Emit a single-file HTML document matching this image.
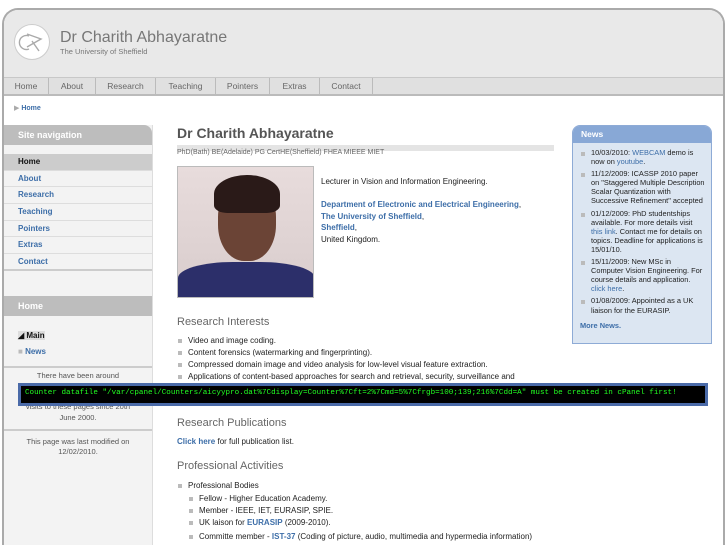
<!DOCTYPE html>
<html><head><meta charset="utf-8"><style>
*{margin:0;padding:0;box-sizing:border-box}
html,body{width:727px;height:545px;overflow:hidden}
body{background:#fff;font-family:"Liberation Sans",sans-serif;font-size:8px;color:#222;position:relative}
.a{position:absolute}
.frame{left:2px;top:8px;width:723px;height:545px;border:2px solid #aaa;border-bottom:none;border-radius:16px 16px 0 0;background:#fff}
.hdr{left:4px;top:10px;width:719px;height:67px;background:#e9e9e9;border-radius:14px 14px 0 0}
.nav{left:4px;top:77px;width:719px;height:19px;background:#e0e0e0;border-top:1px solid #c8c8c8;border-bottom:2px solid #bbb}
.nav span{float:left;height:17px;line-height:17px;text-align:center;color:#666;font-size:8.5px;border-right:1px solid #bbb}
.blue{color:#3d6ea8;font-weight:bold}
.side{left:4px;top:125px;width:149px;height:420px;background:#f3f3f3;border-right:1px solid #ddd}
.sh{background:#bdbdbd;color:#fff;font-weight:bold;font-size:9px;padding-left:14px;height:20px;line-height:20px}
.si{height:16.7px;line-height:16px;padding-left:14px;border-bottom:1px solid #ddd;font-weight:bold;color:#3d6ea8;font-size:8px}
h2{font-weight:normal;color:#666;font-size:11px}
ul{list-style:none}
li{position:relative;padding-left:11px}
li:before{content:"";position:absolute;left:1px;top:4px;width:4px;height:4px;background:#bbb}
</style></head><body>
<div class="a frame"></div>
<div class="a hdr"></div>
<div class="a" style="left:14px;top:24px;width:36px;height:36px;border-radius:50%;background:#fff;border:1px solid #ccc">
<svg width="34" height="34" viewBox="0 0 34 34"><path d="M14 11 A7 7 0 1 0 14 24" fill="none" stroke="#aaa" stroke-width="1.4"/><path d="M12 9 L26 14 L12 22 M17 16 L24 26" fill="none" stroke="#aaa" stroke-width="1.4"/></svg></div>
<div class="a" style="left:60px;top:29px;font-size:16px;color:#777">Dr Charith Abhayaratne</div>
<div class="a" style="left:60px;top:47px;font-size:7.5px;color:#777">The University of Sheffield</div>
<div class="a nav"><span style="width:45px">Home</span><span style="width:47px">About</span><span style="width:60px">Research</span><span style="width:60px">Teaching</span><span style="width:54px">Pointers</span><span style="width:50px">Extras</span><span style="width:53px">Contact</span></div>
<div class="a" style="left:14px;top:104px;font-size:7px"><span style="color:#aaa">▶</span> <span class="blue">Home</span></div>
<div class="a side">
<div class="sh" style="border-radius:0 8px 0 0">Site navigation</div>
<div style="height:9px"></div>
<div class="si" style="background:#ccc;color:#111">Home</div>
<div class="si">About</div><div class="si">Research</div><div class="si">Teaching</div><div class="si">Pointers</div><div class="si">Extras</div><div class="si" style="border-bottom:2px solid #ccc">Contact</div>
<div style="height:25px"></div>
<div class="sh">Home</div>
<div style="height:12px"></div>
<div style="padding-left:14px;font-weight:bold;line-height:16px"><span style="background:#ddd;color:#111">◢ Main</span><br><span class="blue"><span style="color:#bbb">■</span> News</span></div>
<div style="border-top:2px solid #ccc;margin-top:6px;text-align:center;color:#555;font-size:7.5px;padding-top:3px;line-height:10.5px">There have been around<br><br><br>visits to these pages since 20th<br>June 2000.</div>
<div style="border-top:2px solid #ccc;margin-top:6px;text-align:center;color:#555;font-size:7.5px;padding-top:6px;line-height:10px">This page was last modified on<br>12/02/2010.</div>
</div>
<div class="a" style="left:177px;top:125px;font-size:14px;font-weight:bold;color:#555">Dr Charith Abhayaratne</div>
<div class="a" style="left:177px;top:145px;width:377px;height:6px;background:#e4e4e4"></div>
<div class="a" style="left:177px;top:149px;font-size:7px;color:#666">PhD(Bath) BE(Adelaide) PG CertHE(Sheffield) FHEA MIEEE MIET</div>
<div class="a" style="left:177px;top:166px;width:137px;height:132px;border:1px solid #bbb;background:linear-gradient(#e8dcdc,#d8cccc);overflow:hidden">
<div class="a" style="left:40px;top:14px;width:58px;height:80px;border-radius:45%;background:#6b4436"></div>
<div class="a" style="left:36px;top:8px;width:66px;height:38px;border-radius:50% 50% 20% 20%;background:#2a1a18"></div>
<div class="a" style="left:0;top:95px;width:137px;height:40px;border-radius:40% 40% 0 0;background:#2c2f6a"></div></div>
<div class="a" style="left:321px;top:176px;font-size:8px;line-height:11.5px;color:#222">Lecturer in Vision and Information Engineering.<br><br><span class="blue">Department of Electronic and Electrical Engineering</span>,<br><span class="blue">The University of Sheffield</span>,<br><span class="blue">Sheffield</span>,<br>United Kingdom.</div>
<h2 class="a" style="left:177px;top:316px">Research Interests</h2>
<ul class="a" style="left:177px;top:335px;font-size:8px;line-height:12px"><li>Video and image coding.</li><li>Content forensics (watermarking and fingerprinting).</li><li>Compressed domain image and video analysis for low-level visual feature extraction.</li><li>Applications of content-based approaches for search and retrieval, security, surveillance and</li></ul>
<div class="a" style="left:18px;top:383px;width:690px;height:23px;background:#000;border:3px solid #4a6aa8;color:#2f2;font-family:'Liberation Mono',monospace;font-size:7.6px;line-height:15px;padding-left:4px;white-space:nowrap;overflow:hidden">Counter datafile "/var/cpanel/Counters/aicyypro.dat%7Cdisplay=Counter%7Cft=2%7Cmd=5%7Cfrgb=100;139;216%7Cdd=A" must be created in cPanel first!</div>
<h2 class="a" style="left:177px;top:417px">Research Publications</h2>
<div class="a" style="left:177px;top:437px;font-size:8px"><span class="blue">Click here</span> for full publication list.</div>
<h2 class="a" style="left:177px;top:460px">Professional Activities</h2>
<ul class="a" style="left:177px;top:480px;font-size:8px;line-height:12px"><li>Professional Bodies<ul style="margin-top:1px"><li>Fellow - Higher Education Academy.</li><li>Member - IEEE, IET, EURASIP, SPIE.</li><li>UK laison for <span class="blue">EURASIP</span> (2009-2010).</li><li style="margin-top:2px">Committe member - <span class="blue">IST-37</span> (Coding of picture, audio, multimedia and hypermedia information)</li></ul></li></ul>
<div class="a" style="left:572px;top:125px;width:140px;height:219px;background:#dce6f2;border:1px solid #8eabd6;border-radius:8px 8px 0 0">
<div style="background:#88a8d6;color:#fff;font-weight:bold;font-size:8.5px;height:17px;line-height:17px;padding-left:8px;border-radius:7px 7px 0 0">News</div>
<ul style="padding:5px 6px 0 7px;font-size:7.4px;line-height:9.1px;color:#222"><li style="margin-bottom:3px">10/03/2010: <span class="blue" style="font-weight:normal">WEBCAM</span> demo is now on <span class="blue" style="font-weight:normal">youtube</span>.</li><li style="margin-bottom:3px">11/12/2009: ICASSP 2010 paper on "Staggered Multiple Description Scalar Quantization with Successive Refinement" accepted</li><li style="margin-bottom:3px">01/12/2009: PhD studentships available. For more details visit <span class="blue" style="font-weight:normal">this link</span>. Contact me for details on topics. Deadline for applications is 15/01/10.</li><li style="margin-bottom:3px">15/11/2009: New MSc in Computer Vision Engineering. For course details and application. <span class="blue" style="font-weight:normal">click here</span>.</li><li>01/08/2009: Appointed as a UK liaison for the EURASIP.</li></ul>
<div class="blue" style="padding:6px 0 0 7px;font-size:7.4px">More News.</div></div>
</body></html>
